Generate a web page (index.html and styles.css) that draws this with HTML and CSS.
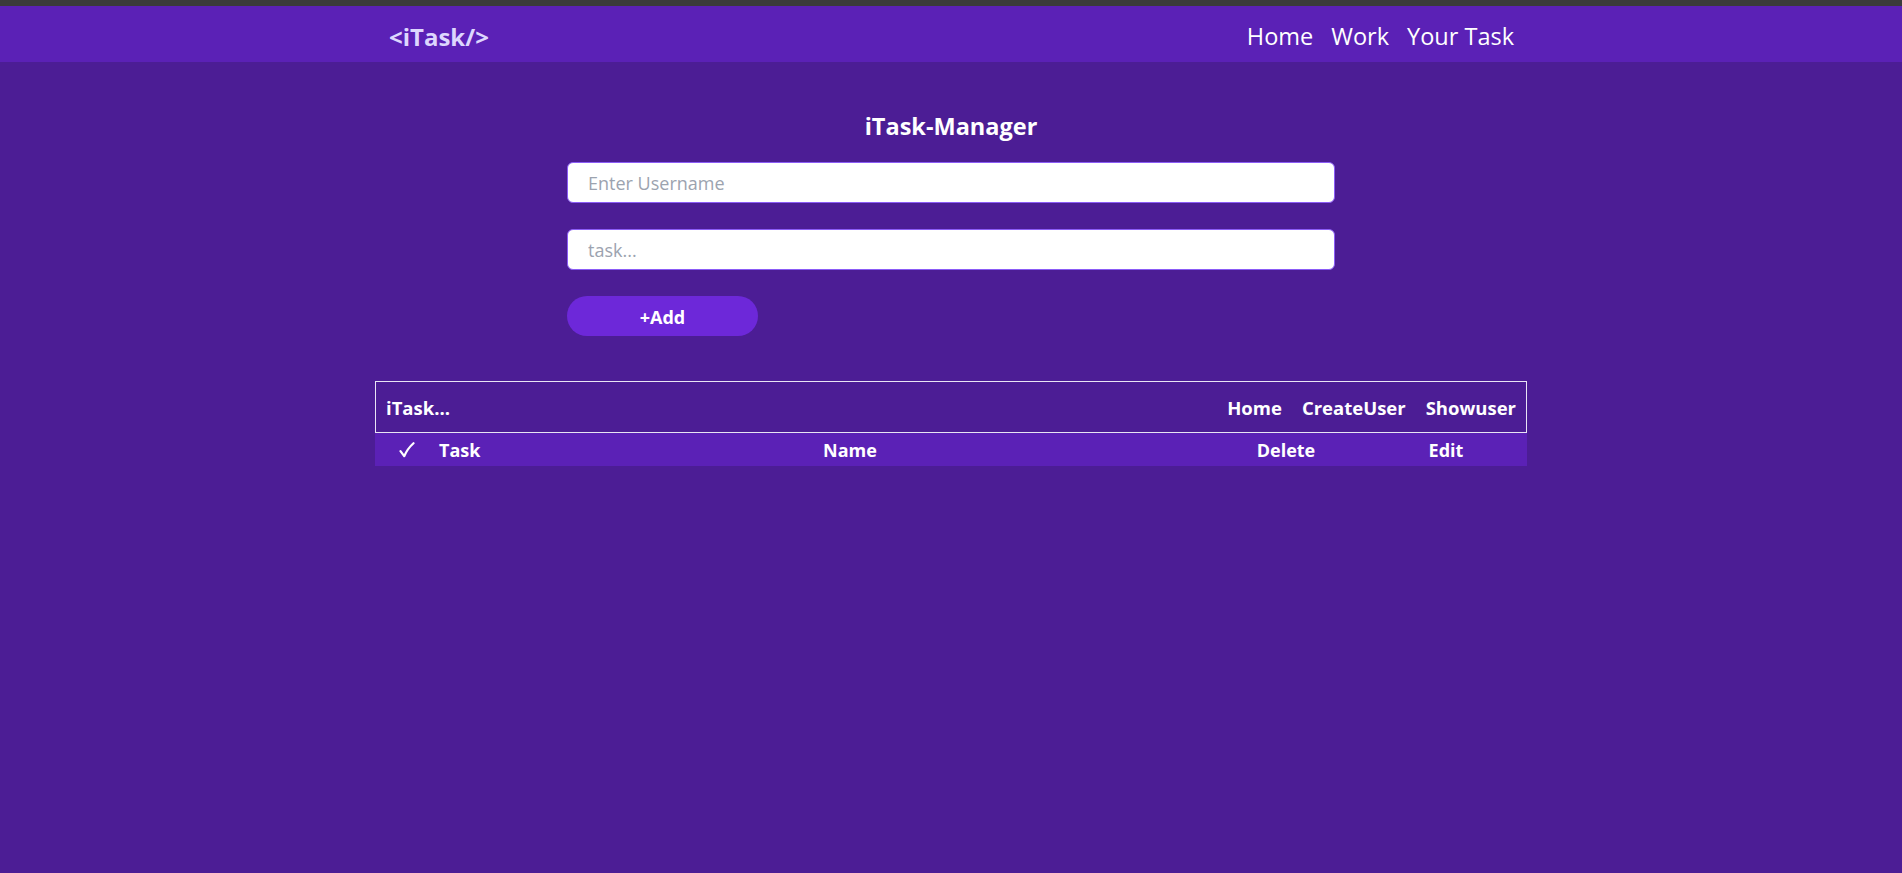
FILE: index.html
```html
<!DOCTYPE html>
<html lang="en">
<head>
<meta charset="utf-8">
<title>iTask</title>
<link rel="stylesheet" href="styles.css">
</head>
<body>
<div class="topline"></div>
<nav class="navbar">
  <div class="nav-inner">
    <div class="logo">&lt;iTask/&gt;</div>
    <ul class="nav-links">
      <li>Home</li>
      <li>Work</li>
      <li>Your Task</li>
    </ul>
  </div>
</nav>
<main>
  <section class="form">
    <h1 class="title">iTask-Manager</h1>
    <input class="field" type="text" placeholder="Enter Username">
    <input class="field" type="text" placeholder="task...">
    <button class="add-btn">+Add</button>
  </section>
  <section class="list">
    <div class="list-bar">
      <div class="list-brand">iTask...</div>
      <ul class="list-links">
        <li>Home</li>
        <li>CreateUser</li>
        <li>Showuser</li>
      </ul>
    </div>
    <div class="list-head">
      <div class="col-check"><svg class="check" width="16" height="16" viewBox="0 0 16 16"><path d="M1.5 9.2 L5.2 14.2 Q8.5 6.5 14.5 1.2" fill="none" stroke="#ffffff" stroke-width="2.2" stroke-linecap="round" stroke-linejoin="round"/></svg></div>
      <div class="col-task">Task</div>
      <div class="col-center">Name</div>
      <div class="col-center">Delete</div>
      <div class="col-center">Edit</div>
    </div>
  </section>
</main>
</body>
</html>
```
FILE: styles.css
```css
* { box-sizing: border-box; }
html, body {
  margin: 0;
  padding: 0;
}
body {
  background: #4c1d95;
  min-height: 100vh;
  font-family: "Open Sans", "Noto Sans", sans-serif;
  color: #ffffff;
}
ul { list-style: none; margin: 0; padding: 0; }
.topline {
  height: 6px;
  background: #3b3b3b;
}
.navbar {
  height: 56px;
  background: #5b21b6;
}
.nav-inner {
  width: 1152px;
  height: 100%;
  margin: 0 auto;
  padding: 4px 13px 0 14px;
  display: flex;
  align-items: center;
  justify-content: space-between;
}
.logo {
  font-size: 24px;
  font-weight: 700;
  color: #ddd6fe;
}
.nav-links {
  display: flex;
  gap: 18px;
  font-size: 23.5px;
}
.form {
  width: 768px;
  margin: 0 auto;
  padding-top: 48px;
  display: flex;
  flex-direction: column;
}
.title {
  margin: 0 0 20px;
  text-align: center;
  font-size: 23.5px;
  line-height: 32px;
  font-weight: 700;
}
.field {
  height: 41px;
  margin: 0 0 26px;
  border: 1px solid #8b5cf6;
  border-radius: 6px;
  padding: 0 20px;
  background: #ffffff;
  font-family: inherit;
  font-size: 18px;
  color: #111;
  outline: none;
}
.field::placeholder { color: #9ca3af; }
.add-btn {
  width: 191px;
  height: 40px;
  border: none;
  border-radius: 20px;
  background: #6d28d9;
  color: #fff;
  font-family: inherit;
  font-size: 18px;
  font-weight: 700;
  padding-top: 2px;
}
.list {
  width: 1152px;
  margin: 45px auto 0;
}
.list-bar {
  height: 52px;
  border: 1px solid #e9e4f5;
  padding: 0 10px 0 10px;
  display: flex;
  align-items: center;
  justify-content: space-between;
  font-weight: 700;
  font-size: 18.5px;
}
.list-links {
  display: flex;
  gap: 20px;
}
.list-head {
  height: 33px;
  background: #5b21b6;
  display: grid;
  grid-template-columns: 62px 56px 714px 158px 162px;
  align-items: center;
  font-weight: 700;
  font-size: 18px;
}
.col-check {
  display: flex;
  justify-content: center;
  padding-left: 2px;
}
.check { display: block; }
.col-task { padding-left: 2px; }
.col-center { text-align: center; }
```
